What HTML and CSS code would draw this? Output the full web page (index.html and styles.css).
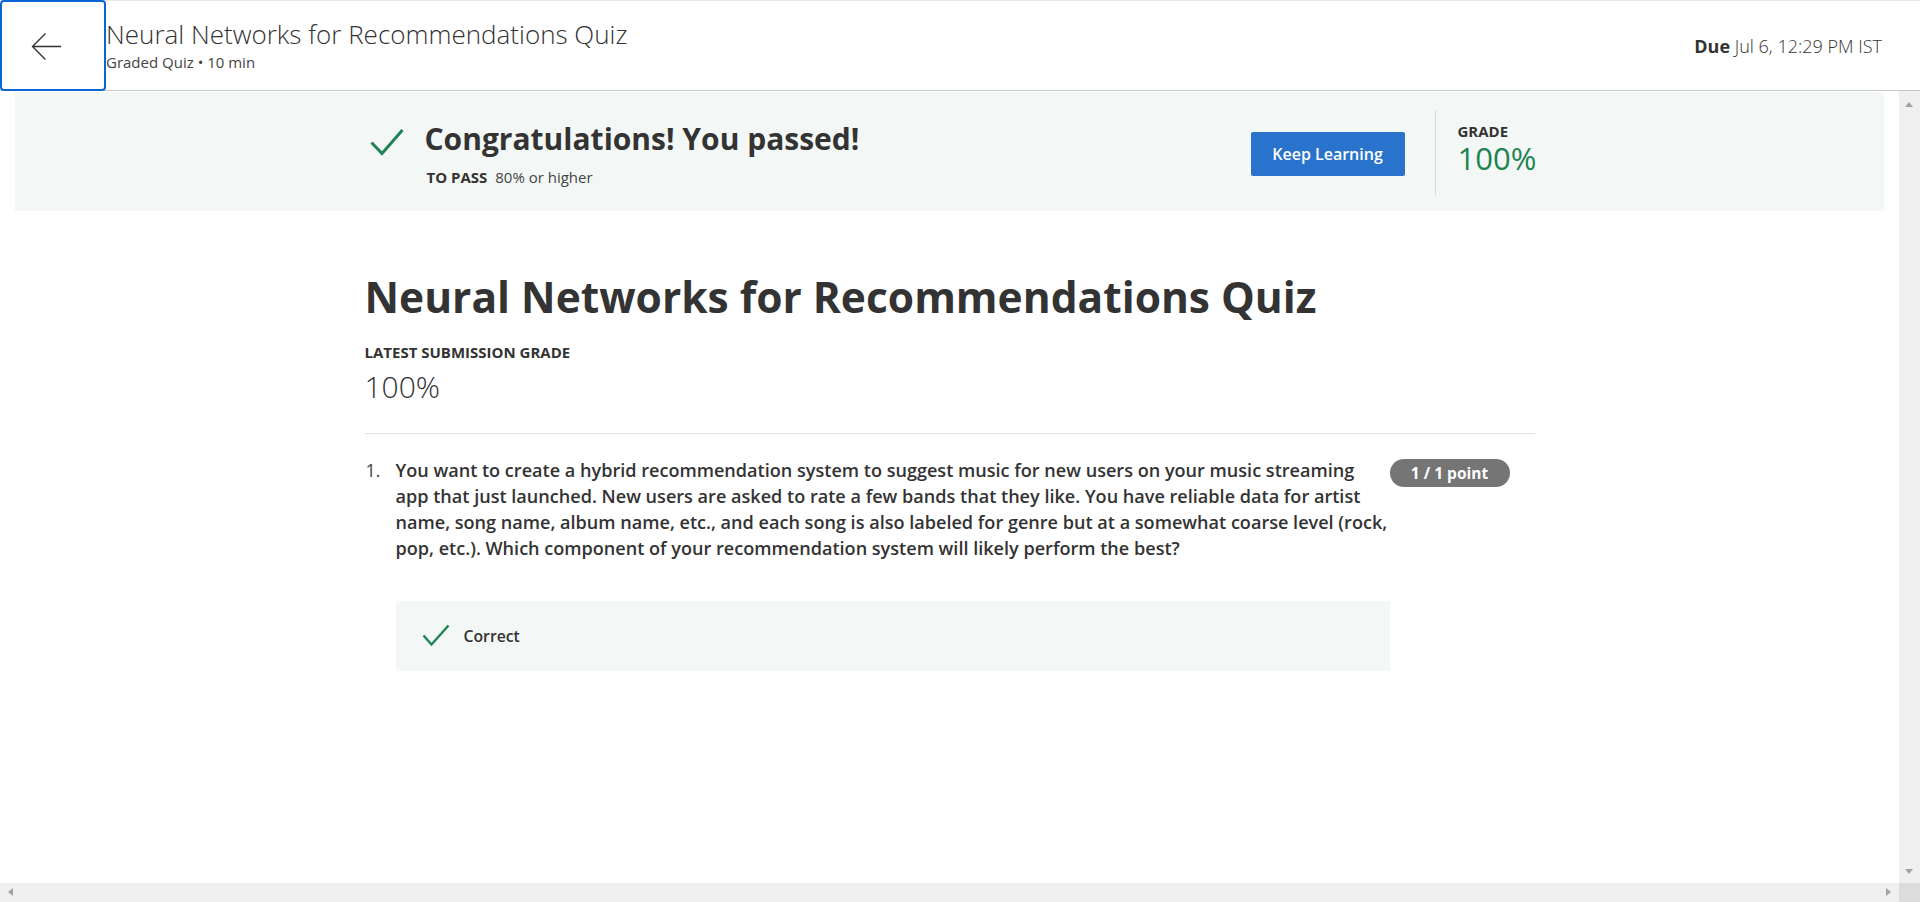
FILE: index.html
```html
<!DOCTYPE html>
<html lang="en">
<head>
<meta charset="utf-8">
<title>Neural Networks for Recommendations Quiz</title>
<link rel="stylesheet" href="styles.css">
</head>
<body>
<div class="app">
  <header class="topbar">
    <button class="back" aria-label="Back">
      <svg width="31" height="29" viewBox="0 0 31 29"><path d="M30 14.5H1.5M14.5 1.5L1.5 14.5l13 13" fill="none" stroke="#333" stroke-width="1.4"/></svg>
    </button>
    <div class="title-block">
      <div class="item-title">Neural Networks for Recommendations Quiz</div>
      <div class="item-meta">Graded Quiz • 10 min</div>
    </div>
    <div class="due"><strong>Due</strong> Jul 6, 12:29 PM IST</div>
  </header>

  <main class="main">
    <section class="banner">
      <div class="banner-inner">
        <div class="pass">
          <svg class="pass-check" width="34" height="28" viewBox="0 0 34 28"><path d="M1.5 14.5l10.5 11L32.5 2" fill="none" stroke="#1f8354" stroke-width="3"/></svg>
          <div class="pass-text">
            <h2 class="pass-title">Congratulations! You passed!</h2>
            <div class="pass-req"><span class="label">TO PASS</span> 80% or higher</div>
          </div>
        </div>
        <button class="btn-primary">Keep Learning</button>
        <div class="vdivider"></div>
        <div class="grade">
          <div class="label">GRADE</div>
          <div class="grade-value">100%</div>
        </div>
      </div>
    </section>

    <section class="content">
      <h1 class="quiz-title">Neural Networks for Recommendations Quiz</h1>
      <div class="label latest">LATEST SUBMISSION GRADE</div>
      <div class="latest-value">100%</div>
      <hr class="sep">
      <div class="question">
        <div class="q-num">1.</div>
        <div class="q-body">
          <p class="q-text">You want to create a hybrid recommendation system to suggest music for new users on your music streaming app that just launched. New users are asked to rate a few bands that they like. You have reliable data for artist name, song name, album name, etc., and each song is also labeled for genre but at a somewhat coarse level (rock, pop, etc.). Which component of your recommendation system will likely perform the best?</p>
          <div class="feedback">
            <svg width="28" height="23" viewBox="0 0 28 23"><path d="M1.5 11.5l8 9L26.5 1.5" fill="none" stroke="#1f8354" stroke-width="2.4"/></svg>
            <span>Correct</span>
          </div>
        </div>
        <div class="points">1 / 1 point</div>
      </div>
    </section>
  </main>

  <div class="vscroll">
    <span class="arrow up"></span>
    <span class="arrow down"></span>
  </div>
  <div class="hscroll">
    <span class="arrow left"></span>
    <span class="arrow right"></span>
  </div>
  <div class="corner"></div>
</div>
</body>
</html>
```

FILE: styles.css
```css
* { box-sizing: border-box; }
html, body { margin: 0; height: 100%; overflow: hidden; }
body {
  font-family: "Open Sans", "Liberation Sans", sans-serif;
  color: #333;
  background: #fff;
}
.app {
  height: 902px;
  display: grid;
  grid-template-rows: 91px 1fr 19px;
  grid-template-columns: 1fr 21px;
}
.topbar {
  grid-column: 1 / 3;
  display: flex;
  align-items: flex-start;
  border-top: 1px solid #e6e6e6;
  border-bottom: 1px solid #c8c8c8;
  background: #fff;
  position: relative;
}
.back {
  width: 106px;
  height: 91px;
  margin-top: -1px;
  border: 2px solid #0a66d8;
  border-radius: 4px;
  background: #fff;
  display: flex;
  align-items: center;
  padding: 0 0 0 29px;
  cursor: pointer;
  flex: none;
}
.back svg { display: block; margin-top: 1px; }
.title-block { padding-top: 17px; flex: 1; }
.item-title {
  font-size: 26px;
  font-weight: 300;
  line-height: 32px;
  color: #333;
}
.item-meta {
  font-size: 15px;
  line-height: 20px;
  margin-top: 2px;
  color: #444;
}
.due {
  font-size: 18px;
  font-weight: 300;
  line-height: 22px;
  padding-top: 34px;
  padding-right: 38px;
  color: #333;
}
.due strong { font-weight: 700; }

.main { grid-column: 1; grid-row: 2; overflow: hidden; }
.banner {
  margin: 1px 15px 0;
  background: #f3f8f6;
  height: 119px;
}
.banner-inner {
  width: 1170px;
  margin: 0 auto;
  height: 100%;
  display: flex;
  align-items: center;
}
.pass {
  flex: 1;
  display: flex;
  align-self: flex-start;
  padding-top: 29px;
  padding-left: 5px;
}
.pass-check { margin-top: 7px; margin-right: 21px; flex: none; }
.pass-title {
  margin: 0;
  font-size: 30px;
  font-weight: 700;
  line-height: 36px;
}
.pass-req {
  margin-top: 10px;
  font-size: 15px;
  line-height: 20px;
  font-weight: 400;
  color: #444;
  padding-left: 2px;
}
.label {
  font-size: 15px;
  font-weight: 700;
  line-height: 20px;
  color: #333;
}
.pass-req .label { margin-right: 4px; }
.btn-primary {
  font-family: inherit;
  background: #2a73cc;
  color: #fff;
  border: none;
  border-radius: 2px;
  width: 154px;
  height: 44px;
  font-size: 16px;
  font-weight: 600;
  margin-top: 5px;
}
.vdivider {
  width: 1px;
  height: 86px;
  background: #dadada;
  margin: 2px 22px 0 30px;
}
.grade { width: 77px; align-self: flex-start; margin-top: 29px; }
.grade-value {
  font-size: 31px;
  font-weight: 400;
  line-height: 34px;
  color: #1f8354;
}

.content {
  width: 1170px;
  margin: 0 auto;
  padding-top: 61px;
}
.quiz-title {
  margin: 0;
  font-size: 42.5px;
  font-weight: 700;
  line-height: 50px;
  color: #333;
}
.latest { margin-top: 20px; }
.latest-value {
  font-size: 30px;
  font-weight: 300;
  line-height: 36px;
  margin-top: 7px;
}
.sep {
  border: none;
  border-top: 1px solid #e1e1e1;
  margin: 28px 0 0;
  height: 0;
}
.question {
  display: flex;
  margin-top: 22.5px;
}
.q-num {
  width: 31px;
  font-size: 18px;
  line-height: 26.25px;
  font-weight: 400;
  color: #444;
  padding-left: 1px;
}
.q-body { width: 994px; }
.q-text {
  margin: 0;
  font-size: 18.08px;
  line-height: 26.25px;
  font-weight: 600;
  color: #333;
}
.feedback {
  margin-top: 39.5px;
  height: 70px;
  background: #f3f8f6;
  display: flex;
  align-items: center;
  padding-left: 26px;
}
.feedback svg { margin-right: 14px; margin-top: -2px; }
.feedback span { font-size: 15.75px; font-weight: 600; color: #333; }
.points {
  margin-top: 2px;
  width: 120px;
  height: 28px;
  border-radius: 14px;
  background: #757575;
  color: #fff;
  font-size: 15.5px;
  font-weight: 700;
  display: flex;
  align-items: center;
  justify-content: center;
  flex: none;
}

.vscroll {
  grid-column: 2; grid-row: 2;
  background: #f0f0f0;
  position: relative;
}
.hscroll {
  grid-column: 1; grid-row: 3;
  background: #f0f0f0;
  position: relative;
}
.corner { grid-column: 2; grid-row: 3; background: #dcdcdc; }
.arrow { position: absolute; width: 0; height: 0; }
.arrow.up { top: 11px; left: 6px; border-left: 4.5px solid transparent; border-right: 4.5px solid transparent; border-bottom: 5px solid #a3a3a3; }
.arrow.down { bottom: 9px; left: 6px; border-left: 4.5px solid transparent; border-right: 4.5px solid transparent; border-top: 5px solid #a3a3a3; }
.arrow.left { left: 8px; top: 5px; border-top: 4.5px solid transparent; border-bottom: 4.5px solid transparent; border-right: 5px solid #a3a3a3; }
.arrow.right { right: 8px; top: 5px; border-top: 4.5px solid transparent; border-bottom: 4.5px solid transparent; border-left: 5px solid #a3a3a3; }
```
